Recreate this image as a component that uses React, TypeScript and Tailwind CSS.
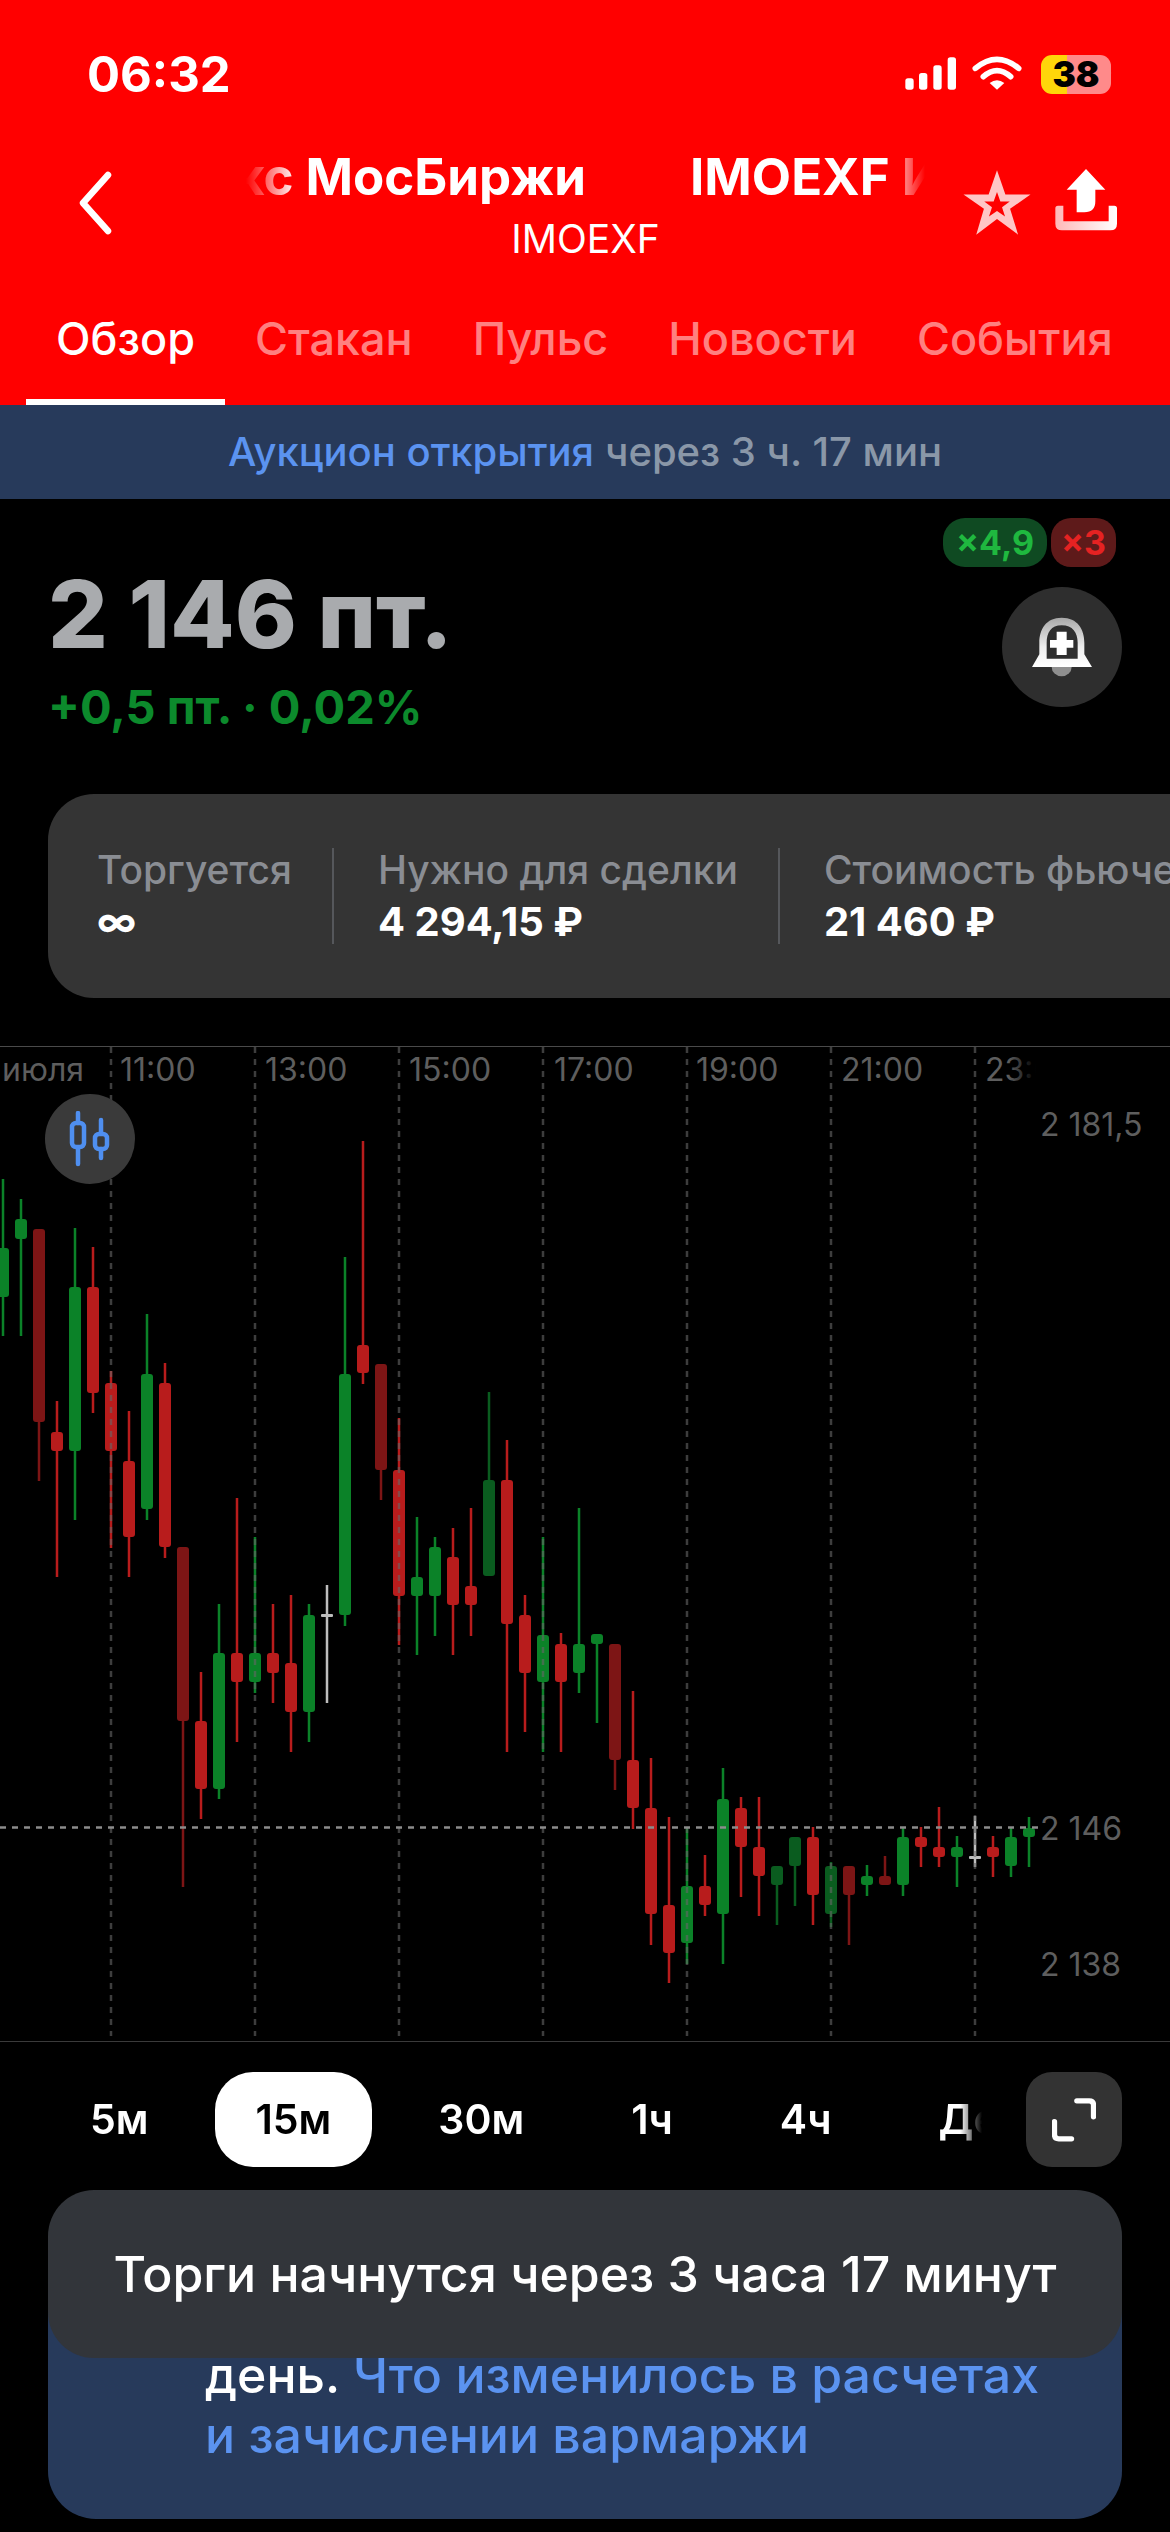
const candles: [string, number, number, number, number][] = [
  // colour, wick top, wick bottom, body top, body bottom (page pixels)
  ["g", 1179, 1336, 1248, 1297],
  ["g", 1199, 1336, 1219, 1239],
  ["R", 1229, 1481, 1229, 1422],
  ["r", 1401, 1577, 1432, 1451],
  ["g", 1228, 1520, 1287, 1451],
  ["r", 1247, 1413, 1287, 1393],
  ["r", 1371, 1548, 1383, 1451],
  ["r", 1411, 1577, 1461, 1537],
  ["g", 1314, 1520, 1374, 1509],
  ["r", 1363, 1558, 1383, 1547],
  ["R", 1547, 1887, 1547, 1721],
  ["r", 1672, 1819, 1721, 1789],
  ["g", 1604, 1799, 1653, 1789],
  ["r", 1498, 1742, 1653, 1682],
  ["g", 1537, 1693, 1653, 1682],
  ["r", 1604, 1703, 1653, 1673],
  ["r", 1595, 1752, 1663, 1712],
  ["g", 1604, 1742, 1615, 1712],
  ["w", 1585, 1703, 1615, 1615],
  ["g", 1257, 1626, 1374, 1615],
  ["r", 1141, 1384, 1345, 1373],
  ["R", 1364, 1500, 1364, 1470],
  ["r", 1418, 1645, 1470, 1596],
  ["g", 1517, 1655, 1577, 1596],
  ["g", 1537, 1636, 1547, 1596],
  ["r", 1528, 1655, 1557, 1605],
  ["r", 1508, 1636, 1586, 1605],
  ["G", 1392, 1576, 1480, 1576],
  ["r", 1440, 1752, 1480, 1624],
  ["r", 1595, 1732, 1615, 1673],
  ["g", 1537, 1752, 1635, 1682],
  ["r", 1633, 1752, 1644, 1682],
  ["g", 1508, 1693, 1644, 1673],
  ["g", 1634, 1723, 1634, 1644],
  ["R", 1644, 1790, 1644, 1760],
  ["r", 1691, 1829, 1760, 1808],
  ["r", 1758, 1945, 1808, 1914],
  ["r", 1817, 1983, 1905, 1953],
  ["g", 1827, 1964, 1886, 1943],
  ["r", 1855, 1916, 1886, 1905],
  ["g", 1768, 1964, 1799, 1914],
  ["r", 1797, 1897, 1808, 1847],
  ["r", 1797, 1916, 1847, 1876],
  ["G", 1866, 1925, 1866, 1885],
  ["G", 1837, 1906, 1837, 1866],
  ["r", 1827, 1925, 1837, 1895],
  ["G", 1862, 1927, 1866, 1914],
  ["R", 1866, 1945, 1866, 1895],
  ["g", 1865, 1896, 1876, 1885],
  ["R", 1856, 1885, 1876, 1885],
  ["g", 1827, 1896, 1837, 1885],
  ["r", 1827, 1867, 1837, 1847],
  ["r", 1807, 1867, 1847, 1857],
  ["g", 1836, 1887, 1847, 1857],
  ["w", 1816, 1867, 1857, 1857],
  ["r", 1836, 1877, 1847, 1857],
  ["g", 1827, 1877, 1837, 1866],
  ["g", 1817, 1867, 1828, 1837],
];

const colors: Record<string, string> = {
  g: "#0b8228",
  G: "#0a5c1f",
  r: "#b81c1c",
  R: "#7d1515",
  w: "#bdbdbd",
};

const gridX = [111, 255, 399, 543, 687, 831, 975];
const timeLabels: [string, number][] = [
  ["июля", 2],
  ["11:00", 120],
  ["13:00", 265],
  ["15:00", 409],
  ["17:00", 554],
  ["19:00", 696],
  ["21:00", 841],
];
const priceLabels: [string, number][] = [
  ["2 181,5", 1136],
  ["2 146", 1840],
  ["2 138", 1976],
];
const tabs = ["Обзор", "Стакан", "Пульс", "Новости", "События"];
const frames = ["5м", "15м", "30м", "1ч", "4ч", "День"];

const Chart = () => (
  <svg viewBox="0 1046 1170 996" className="absolute inset-0 h-full w-full">
    <defs>
      <linearGradient id="fade23" gradientUnits="userSpaceOnUse" x1="1008" x2="1036" y1="0" y2="0">
        <stop offset="0" stopColor="#5e5e5e" />
        <stop offset="1" stopColor="#5e5e5e" stopOpacity="0" />
      </linearGradient>
    </defs>
    <line x1="0" x2="1170" y1="1046.5" y2="1046.5" stroke="#4a4a4a" strokeWidth="1" />
    <line x1="0" x2="1170" y1="2041.5" y2="2041.5" stroke="#3a3a3a" strokeWidth="1" />
    {candles.map(([c, wt, wb, bt, bb], i) => {
      const x = 3 + 18 * i;
      return (
        <g key={i} fill={colors[c]}>
          <rect x={x - 1.25} y={wt} width="2.5" height={wb - wt} />
          {c === "w" ? (
            <rect x={x - 6} y={bt - 1} width="12" height="3" rx="1" />
          ) : (
            <rect x={x - 6} y={bt} width="12" height={Math.max(bb - bt, 4)} rx="3" />
          )}
        </g>
      );
    })}
    {gridX.map((x) => (
      <line key={x} x1={x} x2={x} y1="1047" y2="2036" stroke="#666" strokeOpacity="0.6" strokeWidth="2.5" strokeDasharray="6 6" />
    ))}
    <line x1="0" x2="1039" y1="1827.5" y2="1827.5" stroke="#8c8c8c" strokeWidth="2.5" strokeDasharray="6 6" />
    {timeLabels.map(([t, x]) => (
      <text key={t} x={x} y="1081" fill="#5e5e5e" fontSize="32">
        {t}
      </text>
    ))}
    <text x="985" y="1081" fill="url(#fade23)" fontSize="32">
      23:00
    </text>
    {priceLabels.map(([t, y]) => (
      <text key={t} x="1040" y={y} fill="#5e5e5e" fontSize="32">
        {t}
      </text>
    ))}
  </svg>
);

const StatusBar = () => (
  <div className="mt-[53px] flex h-[42px] items-center justify-between pl-[87px] pr-[56px]">
    <span className="text-[49px] leading-none font-bold text-white">06:32</span>
    <div className="flex items-center">
      <svg width="216" height="42" viewBox="0 0 648 126" className="block">
        <g fill="#fff">
          <rect x="22" y="76" width="25" height="34" rx="8" />
          <rect x="63" y="60" width="25" height="50" rx="8" />
          <rect x="106" y="37" width="25" height="73" rx="8" />
          <rect x="149" y="13" width="25" height="97" rx="8" />
          <path d="M297 110 L275 90 Q297 73 319 90 Z" />
        </g>
        <g fill="none" stroke="#fff" strokeWidth="17" strokeLinecap="round">
          <path d="M256 71 Q297 35 338 71" />
          <path d="M232 46 Q297 -8 362 46" />
        </g>
        <path d="M634 47 Q645 60 634 75 Z" fill="#ff8a8a" />
      </svg>
      <div className="ml-[-73px] flex h-[39px] w-[70px] shrink-0 items-center justify-center rounded-[11px] bg-[linear-gradient(90deg,#ffd60a_37%,#ff8a8a_37%)] text-[35px] leading-none font-black text-black">
        38
      </div>
      <div className="w-[3px]" />
    </div>
  </div>
);

const NavRow = () => (
  <div className="mt-[58px] flex h-[110px] items-start">
    <svg width="40" height="64" viewBox="0 0 40 64" className="mt-[18px] ml-[76px] shrink-0">
      <path d="M32 4 L7 32 L32 60" fill="none" stroke="#fff" strokeWidth="6.5" strokeLinecap="round" strokeLinejoin="round" />
    </svg>
    <div className="ml-[130px] flex w-[679px] shrink-0 flex-col items-center">
      <div className="-mt-[3px] flex w-full overflow-hidden [mask-image:linear-gradient(90deg,transparent_0,#000_50px,#000_640px,transparent_679px)] text-[51px] leading-[54px] font-bold whitespace-nowrap text-white">
        <div className="flex w-[340px] shrink-0 justify-end">
          <span className="shrink-0">Индекс МосБиржи</span>
        </div>
        <span className="ml-[104px] shrink-0">IMOEXF Индекс</span>
      </div>
      <span className="mt-[13px] text-[39px] leading-[44px] text-white">IMOEXF</span>
    </div>
    <svg width="70" height="67" viewBox="36 36 208 200" className="mt-[16px] ml-[37px] shrink-0">
      <path
        fillRule="evenodd"
        fill="#ffc6c6"
        d="M140 40 L165 112 L240 112 L179 155 L203 232 L140 185 L78 232 L101 155 L40 112 L115 112 Z M140 105 L150 133 L178 133 L155 150 L164 178 L140 161 L116 178 L125 150 L102 133 L130 133 Z"
      />
    </svg>
    <svg width="64" height="64" viewBox="314 36 192 190" className="mt-[15px] ml-[22px] shrink-0">
      <defs>
        <linearGradient id="tray" x1="0" x2="1" y1="0" y2="0">
          <stop offset="0" stopColor="#ffb8b8" />
          <stop offset="1" stopColor="#fff" />
        </linearGradient>
      </defs>
      <path fill="#fff" d="M410 38 L468 100 L438 100 L438 135 Q438 168 405 168 L382 168 L382 100 L352 100 Z" />
      <path fill="url(#tray)" d="M326 148 L342 148 L342 195 L478 195 L478 148 L495 148 Q503 148 503 156 L503 202 Q503 222 483 222 L338 222 Q318 222 318 202 L318 156 Q318 148 326 148 Z" />
    </svg>
  </div>
);

const Stat = ({ label, value, line }: { label: string; value: string; line?: boolean }) => (
  <div className={`flex h-[96px] shrink-0 flex-col justify-between pr-[40px] ${line ? "mr-[44px] border-r-2 border-[#55575b]" : ""}`}>
    <span className="text-[39px] leading-[44px] font-medium whitespace-nowrap text-[#8a8d93]">{label}</span>
    <span className="text-[40px] leading-[44px] font-bold whitespace-nowrap text-white">{value}</span>
  </div>
);

export default function App() {
  return (
    <div className="h-[2532px] w-[1170px] overflow-hidden bg-black font-['Inter',sans-serif]">
      <header className="flex h-[405px] flex-col bg-[#ff0000]">
        <StatusBar />
        <NavRow />
        <nav className="ml-[26px] flex h-[142px] text-[45px] font-medium">
          {tabs.map((t, i) => (
            <div
              key={t}
              className={`flex items-center border-b-[6px] px-[30px] pt-4 whitespace-nowrap ${i === 0 ? "border-white text-white" : "border-transparent text-[#ff8080]"}`}
            >
              {t}
            </div>
          ))}
        </nav>
      </header>

      <div className="flex h-[94px] items-center justify-center bg-[#273a5b] text-[40px] font-medium">
        <span className="text-[#5b93f0]">Аукцион открытия</span>
        <span className="ml-[11px] text-[#8a97a8]">через 3 ч. 17 мин</span>
      </div>

      <section className="flex h-[295px] justify-between pl-[48px] pr-[48px]">
        <div className="pt-[60px]">
          <div className="text-[94px] leading-[110px] font-extrabold whitespace-nowrap text-[#a9abae]">2 146 пт.</div>
          <div className="mt-[13px] text-[47px] leading-[50px] font-bold whitespace-nowrap text-[#0c8a2c]">+0,5 пт. · 0,02%</div>
        </div>
        <div className="flex flex-col items-end pt-[19px]">
          <div className="flex gap-[4px] pr-[6px] text-[34px] font-bold">
            <span className="flex h-[49px] w-[104px] items-center justify-center rounded-[22px] bg-[#0f4a22] text-[#1fb83f]">×4,9</span>
            <span className="flex h-[49px] w-[65px] items-center justify-center rounded-[20px] bg-[#5e1a1a] text-[#e52222]">×3</span>
          </div>
          <div className="mt-[20px] flex size-[120px] items-center justify-center rounded-full bg-[#2e2e2e]">
            <svg width="60" height="60" viewBox="68 55 180 176">
              <defs>
                <linearGradient id="bell" x1="0" x2="0" y1="0" y2="1">
                  <stop offset="0" stopColor="#a8a8a8" />
                  <stop offset="0.6" stopColor="#eee" />
                  <stop offset="1" stopColor="#fff" />
                </linearGradient>
              </defs>
              <path d="M127 203 H187 A30 28 0 0 1 127 203 Z" fill="#8f8f8f" />
              <path
                fillRule="evenodd"
                fill="url(#bell)"
                d="M157 55 C205 55 225 90 225 130 L225 165 L248 203 L68 203 L90 165 L90 130 C90 90 110 55 157 55 Z M157 78 C125 78 112 100 112 130 L112 178 L205 178 L205 130 C205 100 190 78 157 78 Z"
              />
              <path fill="#fff" d="M142 97 H172 V122 H192 V145 H172 V167 H142 V145 H122 V122 H142 Z" />
            </svg>
          </div>
        </div>
      </section>

      <div className="ml-12 flex h-[204px] w-[1200px] items-center overflow-hidden rounded-[46px] bg-[#343434] pl-[49px]">
        <Stat label="Торгуется" value="∞" line />
        <Stat label="Нужно для сделки" value="4 294,15 ₽" line />
        <Stat label="Стоимость фьючерса" value="21 460 ₽" />
      </div>

      <div className="relative mt-[48px] h-[996px]">
        <Chart />
        <div className="absolute top-[48px] left-[45px] flex size-[90px] items-center justify-center rounded-full bg-[#3a3a3a]">
          <svg width="46" height="56" viewBox="0 0 46 56">
            <g fill="none" stroke="#4f8ff0" strokeWidth="4.5" strokeLinecap="round" strokeLinejoin="round">
              <path d="M11 2 V12 M11 37 V53" />
              <rect x="5" y="12" width="12" height="24" rx="4" />
              <path d="M34 9 V22 M34 38 V47" />
              <rect x="28" y="23" width="12" height="15" rx="4" />
            </g>
          </svg>
        </div>
      </div>

      <div className="mt-[30px] flex h-[95px] items-center justify-between pr-[48px]">
        <div className="flex h-full w-[985px] gap-[25px] overflow-hidden pl-[49px] [mask-image:linear-gradient(90deg,#000_960px,transparent_982px)] text-[41px] font-semibold">
          {frames.map((f, i) => (
            <div
              key={f}
              className={`flex shrink-0 items-center rounded-[38px] px-[41px] ${i === 1 ? "bg-white text-black" : "text-white"}`}
            >
              {f}
            </div>
          ))}
        </div>
        <div className="flex h-full w-[96px] items-center justify-center rounded-[26px] bg-[#333333]">
          <svg width="44" height="44" viewBox="100 90 124 124">
            <path d="M170 98 L205 98 Q217 98 217 110 L217 143 M107 157 L107 193 Q107 205 119 205 L155 205" fill="none" stroke="#fff" strokeWidth="15" strokeLinecap="round" />
          </svg>
        </div>
      </div>

      <div className="relative mx-12 mt-[63px]">
        <div className="flex h-[289px] flex-col justify-end rounded-[48px] bg-[#273a5b] pb-[54px] pl-[157px] text-[50px] leading-[60px] font-medium whitespace-nowrap">
          <div>
            <span className="text-white">день. </span>
            <span className="text-[#5b93f0]">Что изменилось в расчетах</span>
          </div>
          <div className="text-[#5b93f0]">и зачислении вармаржи</div>
        </div>
        <div className="absolute -top-[40px] left-0 flex h-[168px] w-full items-center justify-center rounded-[46px] bg-[#32353a] text-[50px] font-medium whitespace-nowrap text-white">
          Торги начнутся через 3 часа 17 минут
        </div>
      </div>
    </div>
  );
}
